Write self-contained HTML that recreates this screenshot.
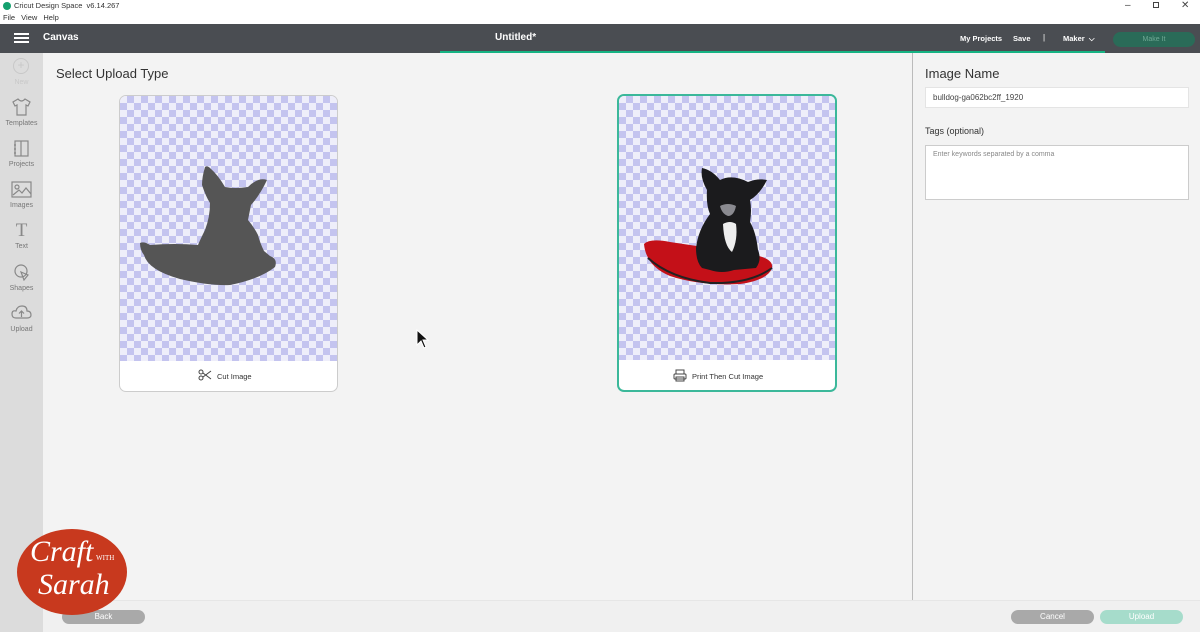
<!DOCTYPE html>
<html><head><meta charset="utf-8"><style>
*{margin:0;padding:0;box-sizing:border-box}
body{width:1200px;height:632px;overflow:hidden;background:#f3f3f3;font-family:"Liberation Sans",sans-serif;position:relative}
.abs{position:absolute}
.checker{background-color:#eeeefa;background-image:linear-gradient(45deg,#c4c4ef 25%,transparent 25%,transparent 75%,#c4c4ef 75%),linear-gradient(45deg,#c4c4ef 25%,transparent 25%,transparent 75%,#c4c4ef 75%);background-size:14px 14px;background-position:0 0,7px 7px}
.nav{font-size:7px;color:#777;text-align:center;width:43px}
.btn{border-radius:8px;color:#fff;font-size:8px;text-align:center;line-height:14px;height:14px}
</style></head><body>
<div class="abs" style="left:0;top:0;width:1200px;height:24px;background:#fff"></div>
<div class="abs" style="left:3px;top:2px;width:8px;height:8px;border-radius:50%;background:#14a06e"></div>
<div class="abs" style="left:14px;top:1px;font-size:7.5px;color:#333">Cricut Design Space&nbsp; v6.14.267</div>
<div class="abs" style="left:3px;top:13px;font-size:7.5px;color:#333;word-spacing:4px">File View Help</div>
<div class="abs" style="left:1125px;top:0;font-size:10px;color:#444">–</div>
<div class="abs" style="left:1153px;top:2px;width:6px;height:6px;border:1px solid #444"></div>
<div class="abs" style="left:1181px;top:0;font-size:10px;color:#444">✕</div>
<div class="abs" style="left:0;top:24px;width:1200px;height:29px;background:#4a4d52"></div>
<div class="abs" style="left:14px;top:33px;width:15px;height:2px;background:#fff;box-shadow:0 4px 0 #fff,0 8px 0 #fff"></div>
<div class="abs" style="left:43px;top:32px;font-size:10px;color:#fff;font-weight:bold">Canvas</div>
<div class="abs" style="left:495px;top:32px;font-size:10px;color:#fff;font-weight:bold">Untitled*</div>
<div class="abs" style="left:440px;top:51px;width:665px;height:2px;background:#16b383"></div>
<div class="abs" style="left:960px;top:34px;font-size:7.5px;color:#fff;font-weight:bold">My Projects</div>
<div class="abs" style="left:1013px;top:34px;font-size:7.5px;color:#fff;font-weight:bold">Save</div>
<div class="abs" style="left:1043px;top:33px;font-size:8px;color:#fff">|</div>
<div class="abs" style="left:1063px;top:34px;font-size:7.5px;color:#fff;font-weight:bold">Maker&nbsp; ⌵</div>
<div class="abs btn" style="left:1113px;top:32px;width:82px;height:15px;background:#2a6b58;color:#6fa894;font-size:7px;line-height:15px">Make It</div>
<div class="abs" style="left:0;top:53px;width:43px;height:579px;background:#dcdcdc"></div>
<div class="abs" style="left:13px;top:58px;width:16px;height:16px;border:1px solid #c8c8c8;border-radius:50%;color:#c8c8c8;font-size:12px;text-align:center;line-height:13px">+</div>
<div class="abs nav" style="left:0;top:79px;color:#c8c8c8">New</div>
<svg class="abs" style="left:11px;top:97px" width="21" height="20" viewBox="0 0 21 20" fill="none" stroke="#888" stroke-width="1.2"><path d="M7 2 L2 5 L4 9 L6 8 V18 H15 V8 L17 9 L19 5 L14 2 Q10.5 6 7 2Z"/></svg>
<div class="abs nav" style="top:120px">Templates</div>
<svg class="abs" style="left:13px;top:139px" width="17" height="19" fill="none" stroke="#888" stroke-width="1.2"><rect x="2" y="2" width="13" height="15"/><path d="M8 2V17M1 6H3M1 10H3M1 14H3"/></svg>
<div class="abs nav" style="top:161px">Projects</div>
<svg class="abs" style="left:11px;top:181px" width="21" height="17" fill="none" stroke="#888" stroke-width="1.2"><rect x="1" y="1" width="19" height="15"/><circle cx="6" cy="6" r="2"/><path d="M2 14 L8 9 L11 12 L15 7 L20 13"/></svg>
<div class="abs nav" style="top:202px">Images</div>
<div class="abs" style="left:11px;top:220px;font-size:19px;color:#888;font-family:'Liberation Serif',serif;width:21px;text-align:center">T</div>
<div class="abs nav" style="top:243px">Text</div>
<svg class="abs" style="left:13px;top:263px" width="18" height="18" fill="none" stroke="#888" stroke-width="1.2"><circle cx="8" cy="8" r="6"/><path d="M8 9 L15 12 L11 17 Z"/></svg>
<div class="abs nav" style="top:285px">Shapes</div>
<svg class="abs" style="left:11px;top:305px" width="21" height="15" fill="none" stroke="#888" stroke-width="1.2"><path d="M5 13 Q1 13 1 9 Q1 5 5 6 Q6 1 11 1 Q16 1 16 6 Q20 6 20 10 Q20 13 16 13Z"/><path d="M10.5 12V6M8 8.5L10.5 6L13 8.5"/></svg>
<div class="abs nav" style="top:326px">Upload</div>
<div class="abs" style="left:56px;top:66px;font-size:13px;color:#333">Select Upload Type</div>
<div class="abs" style="left:119px;top:95px;width:219px;height:297px;border:1px solid #ccc;border-radius:7px;background:#fff;overflow:hidden">
 <div class="checker" style="width:217px;height:265px"></div>
</div>
<svg class="abs" style="left:130px;top:155px" width="160" height="140"><path d="M75 12 Q72 22 72 30 Q76 42 80 48 Q80 62 75 75 Q70 85 68 90 Q45 88 20 90 Q14 86 10 88 Q10 95 14 100 Q18 115 50 124 Q80 131 100 130 Q130 124 145 112 Q148 104 140 101 L134 96 Q130 88 128 80 Q124 72 118 65 Q120 55 121 50 Q130 40 137 25 Q128 22 118 32 Q105 34 95 32 Q88 20 80 13 Q77 10 75 12Z" fill="#555"/></svg>
<svg class="abs" style="left:198px;top:369px" width="14" height="12" fill="none" stroke="#444" stroke-width="1"><circle cx="3" cy="3" r="2"/><circle cx="3" cy="9" r="2"/><path d="M5 4L13 10M5 8L13 2"/></svg>
<div class="abs" style="left:217px;top:372px;font-size:7.5px;color:#333">Cut Image</div>
<div class="abs" style="left:617px;top:94px;width:220px;height:298px;border:2px solid #3bb89a;border-radius:7px;background:#fff;overflow:hidden">
 <div class="checker" style="width:216px;height:264px"></div>
</div>
<svg class="abs" style="left:610px;top:150px" width="180" height="140">
 <path d="M34 94 Q40 88 60 92 Q100 98 140 104 Q164 108 162 118 Q158 130 130 134 Q90 136 60 126 Q36 116 34 94Z" fill="#c41018"/>
 <path d="M38 108 Q60 128 100 133 Q140 134 162 118" stroke="#222" stroke-width="2" fill="none"/>
 <path d="M92 18 Q90 28 97 40 Q96 55 100 64 Q88 80 86 98 Q86 112 92 118 L100 120 Q112 124 124 120 L146 118 Q152 110 148 100 Q146 82 140 72 Q142 60 140 50 Q150 44 157 30 Q148 28 138 32 Q122 24 110 30 Q102 20 92 18Z" fill="#1b1b1d"/>
 <path d="M113 74 Q120 70 126 74 Q128 90 122 102 Q114 96 113 74Z" fill="#eee"/>
 <path d="M110 56 Q118 52 126 56 Q124 66 118 66 Q112 64 110 56Z" fill="#8a8a90"/>
</svg>
<svg class="abs" style="left:673px;top:369px" width="14" height="13" fill="none" stroke="#444" stroke-width="1"><rect x="3" y="1" width="8" height="4"/><rect x="1" y="5" width="12" height="5" rx="1"/><rect x="3" y="8" width="8" height="4"/></svg>
<div class="abs" style="left:692px;top:372px;font-size:7.5px;color:#333">Print Then Cut Image</div>
<svg class="abs" style="left:416px;top:329px" width="14" height="20"><path d="M1 1 L1 16 L5 12 L8 19 L10 18 L7 11 L12 11Z" fill="#111" stroke="#fff" stroke-width="1"/></svg>
<div class="abs" style="left:912px;top:53px;width:1px;height:547px;background:#bbb"></div>
<div class="abs" style="left:925px;top:66px;font-size:13px;color:#333">Image Name</div>
<div class="abs" style="left:925px;top:87px;width:264px;height:21px;background:#fff;border:1px solid #e4e4e4;font-size:8px;color:#444;padding:5px 7px">bulldog-ga062bc2ff_1920</div>
<div class="abs" style="left:925px;top:126px;font-size:9px;color:#333">Tags (optional)</div>
<div class="abs" style="left:925px;top:145px;width:264px;height:55px;background:#fff;border:1px solid #ccc;font-size:7px;color:#888;padding:5px 7px">Enter keywords separated by a comma</div>
<div class="abs" style="left:43px;top:600px;width:1157px;height:32px;background:#f0f0f0;border-top:1px solid #e6e6e6"></div>
<div class="abs btn" style="left:62px;top:610px;width:83px;background:#a9a9a9">Back</div>
<div class="abs btn" style="left:1011px;top:610px;width:83px;background:#a9a9a9">Cancel</div>
<div class="abs btn" style="left:1100px;top:610px;width:83px;background:#a6dccb">Upload</div>
<div class="abs" style="left:17px;top:529px;width:110px;height:86px;border-radius:50%;background:#c8391e"></div>
<div class="abs" style="left:30px;top:535px;font-family:'Liberation Serif',serif;font-style:italic;color:#fff;font-size:30px">Craft</div>
<div class="abs" style="left:96px;top:554px;font-family:'Liberation Serif',serif;color:#fff;font-size:7px">WITH</div>
<div class="abs" style="left:38px;top:568px;font-family:'Liberation Serif',serif;font-style:italic;color:#fff;font-size:30px">Sarah</div>
</body></html>
